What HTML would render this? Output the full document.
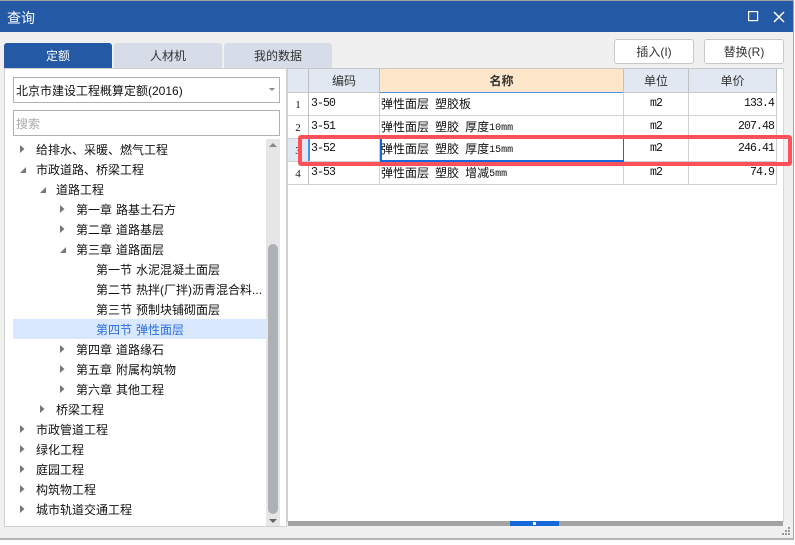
<!DOCTYPE html>
<html lang="zh">
<head>
<meta charset="utf-8">
<style>
html,body{margin:0;padding:0;background:#fff;}
#w{position:relative;width:795px;height:545px;overflow:hidden;background:#fff;font-family:"Liberation Sans","Noto Sans CJK SC",sans-serif;font-size:12px;color:#111;}
#w div{position:absolute;box-sizing:border-box;}
#w svg{position:absolute;display:block;}
.t{white-space:nowrap;line-height:22px;height:20px;word-spacing:.7px;}
.tab{top:43px;width:108px;height:25px;line-height:27px;text-align:center;background:#d6dce8;border-radius:3px 3px 0 0;color:#333;}
.btn{top:39px;width:80px;height:25px;line-height:25px;text-align:center;background:#fff;border:1px solid #c8c8c8;border-radius:3px;color:#333;}
.hd{top:69px;height:24px;line-height:25px;text-align:center;background:#e1e8f2;border-right:1px solid #c0c0c0;border-bottom:1px solid #c8c8c8;color:#333;font-size:12px;}
.h{left:288px;width:489px;height:1px;background:#d0d0d0;}
.v{width:1px;top:92px;height:93px;background:#d0d0d0;}
.c{white-space:nowrap;height:22px;line-height:22px;}
.m{font-family:"Liberation Mono","Noto Sans CJK SC",monospace;font-size:11.500px;letter-spacing:-.9px;color:#111;}
.n{left:288px;width:20px;text-align:center;font-family:"Liberation Serif",serif;font-size:11px;background:#fff;}
.cn{left:381px;font-size:12px;letter-spacing:0;word-spacing:2.7px;}
.cn span{font-family:"Liberation Mono",monospace;font-size:10px;letter-spacing:0;position:relative;top:-1px;}
.u{left:624px;width:64px;text-align:center;}
.p{left:689px;width:85px;text-align:right;}
</style>
</head>
<body>
<div id="w">
  <div style="left:0;top:0;width:794px;height:540px;background:#f0f0f0;border-right:1px solid #a8a8a8;border-bottom:2px solid #b4b4b4;"></div>
  <div style="left:0;top:0;width:794px;height:1px;background:#a0a0a0;"></div>
  <div style="left:0;top:1px;width:793px;height:31px;background:#245aa5;"></div>
  <div class="t" style="left:7px;top:7px;color:#fff;font-size:14px;">查询</div>
  <svg style="left:748px;top:11px" width="11" height="11" viewBox="0 0 11 11"><rect x=".6" y=".6" width="9" height="9" fill="none" stroke="#fff" stroke-width="1.2"/></svg>
  <svg style="left:773px;top:11px" width="12" height="12" viewBox="0 0 12 12"><path d="M1 1L11 11M11 1L1 11" fill="none" stroke="#fff" stroke-width="1.5"/></svg>

  <div class="tab" style="left:4px;background:#245aa5;color:#fff;">定额</div>
  <div class="tab" style="left:114px;">人材机</div>
  <div class="tab" style="left:224px;">我的数据</div>
  <div class="btn" style="left:614px;">插入(I)</div>
  <div class="btn" style="left:704px;">替换(R)</div>

  <div style="left:4px;top:68px;width:283px;height:459px;background:#fff;border:1px solid #d0d0d0;"></div>
  <div style="left:13px;top:77px;width:267px;height:26px;background:#fff;border:1px solid #b0b0b0;line-height:26px;padding-left:2px;white-space:nowrap;">北京市建设工程概算定额(2016)</div>
  <svg style="left:268px;top:87px" width="8" height="5"><path d="M1 1H7L4 4Z" fill="#888"/></svg>
  <div style="left:13px;top:110px;width:267px;height:26px;background:#fff;border:1px solid #b0b0b0;line-height:26px;padding-left:2px;color:#aaa;">搜索</div>

  <div class="t" style="left:36px;top:139px;">给排水、采暖、燃气工程</div>
  <div class="t" style="left:36px;top:159px;">市政道路、桥梁工程</div>
  <div class="t" style="left:56px;top:179px;">道路工程</div>
  <div class="t" style="left:76px;top:199px;">第一章 路基土石方</div>
  <div class="t" style="left:76px;top:219px;">第二章 道路基层</div>
  <div class="t" style="left:76px;top:239px;">第三章 道路面层</div>
  <div class="t" style="left:96px;top:259px;">第一节 水泥混凝土面层</div>
  <div class="t" style="left:96px;top:279px;">第二节 热拌(厂拌)沥青混合料...</div>
  <div class="t" style="left:96px;top:299px;">第三节 预制块铺砌面层</div>
  <div style="left:13px;top:319px;width:253px;height:20px;background:#d9e7ff;"></div>
  <div class="t" style="left:96px;top:319px;color:#2a6fdc;">第四节 弹性面层</div>
  <div class="t" style="left:76px;top:339px;">第四章 道路缘石</div>
  <div class="t" style="left:76px;top:359px;">第五章 附属构筑物</div>
  <div class="t" style="left:76px;top:379px;">第六章 其他工程</div>
  <div class="t" style="left:56px;top:399px;">桥梁工程</div>
  <div class="t" style="left:36px;top:419px;">市政管道工程</div>
  <div class="t" style="left:36px;top:439px;">绿化工程</div>
  <div class="t" style="left:36px;top:459px;">庭园工程</div>
  <div class="t" style="left:36px;top:479px;">构筑物工程</div>
  <div class="t" style="left:36px;top:499px;">城市轨道交通工程</div>

  <svg style="left:0;top:0" width="100" height="545" viewBox="0 0 100 545">
    <g fill="#777">
      <path d="M20 145v8l4.500-4z"/>
      <path d="M20 173l6-6v6z"/>
      <path d="M40 193l6-6v6z"/>
      <path d="M60 205v8l4.500-4z"/>
      <path d="M60 225v8l4.500-4z"/>
      <path d="M60 253l6-6v6z"/>
      <path d="M60 345v8l4.500-4z"/>
      <path d="M60 365v8l4.500-4z"/>
      <path d="M60 385v8l4.500-4z"/>
      <path d="M40 405v8l4.500-4z"/>
      <path d="M20 425v8l4.500-4z"/>
      <path d="M20 445v8l4.500-4z"/>
      <path d="M20 465v8l4.500-4z"/>
      <path d="M20 485v8l4.500-4z"/>
      <path d="M20 505v8l4.500-4z"/>
    </g>
  </svg>

  <div style="left:266px;top:139px;width:14px;height:387px;background:#e6e6e8;"></div>
  <div style="left:268px;top:244px;width:10px;height:270px;background:#adb0b5;border-radius:5px;"></div>
  <svg style="left:268px;top:142px" width="10" height="6"><path d="M1 5L5 1L9 5Z" fill="#888"/></svg>
  <svg style="left:268px;top:518px" width="10" height="6"><path d="M1 1H9L5 5Z" fill="#666"/></svg>

  <div style="left:287px;top:68px;width:497px;height:454px;background:#fff;border-top:1px solid #c8c8c8;border-left:1px solid #d0d0d0;border-right:1px solid #d8d8d8;"></div>
  <div class="hd" style="left:288px;width:21px;"></div>
  <div class="hd" style="left:309px;width:71px;">编码</div>
  <div class="hd" style="left:380px;width:244px;background:#fde6c9;border-bottom:1px solid #4a90e8;font-weight:bold;">名称</div>
  <div class="hd" style="left:624px;width:65px;">单位</div>
  <div class="hd" style="left:689px;width:88px;">单价</div>

  <div style="left:288px;top:93px;width:20px;height:92px;background:#fff;"></div>
  <div style="left:288px;top:139px;width:20px;height:22px;background:#e1e8f2;"></div>
  <div class="h" style="top:115px;"></div>
  <div class="h" style="top:138px;"></div>
  <div class="h" style="top:161px;"></div>
  <div class="h" style="top:184px;"></div>
  <div class="v" style="left:287px;"></div>
  <div class="v" style="left:308px;background:#c0c0c0;"></div>
  <div class="v" style="left:379px;"></div>
  <div class="v" style="left:623px;"></div>
  <div class="v" style="left:688px;"></div>
  <div class="v" style="left:776px;"></div>

  <div class="c n" style="top:94px;background:none;">1</div>
  <div class="c n" style="top:117px;background:none;">2</div>
  <div class="c n" style="top:140px;background:none;">3</div>
  <div class="c n" style="top:163px;background:none;">4</div>

  <div class="c m" style="left:311px;top:93px;">3-50</div>
  <div class="c m" style="left:311px;top:116px;">3-51</div>
  <div class="c m" style="left:311px;top:138px;">3-52</div>
  <div class="c m" style="left:311px;top:162px;">3-53</div>

  <div style="left:380px;top:138px;width:244px;height:24px;border:1px solid #1668dc;border-width:1px 1px 2px 2px;border-top-color:transparent;"></div>
  <div style="left:308px;top:139px;width:2px;height:22px;background:#4a90e8;"></div>

  <div class="c cn" style="top:93px;">弹性面层 塑胶板</div>
  <div class="c cn" style="top:116px;">弹性面层 塑胶 厚度<span>10mm</span></div>
  <div class="c cn" style="top:138px;">弹性面层 塑胶 厚度<span>15mm</span></div>
  <div class="c cn" style="top:162px;">弹性面层 塑胶 增减<span>5mm</span></div>

  <div class="c m u" style="top:93px;">m2</div>
  <div class="c m u" style="top:116px;">m2</div>
  <div class="c m u" style="top:138px;">m2</div>
  <div class="c m u" style="top:162px;">m2</div>
  <div class="c m p" style="top:93px;">133.4</div>
  <div class="c m p" style="top:116px;">207.48</div>
  <div class="c m p" style="top:138px;">246.41</div>
  <div class="c m p" style="top:162px;">74.9</div>

  <div style="left:298px;top:135px;width:494px;height:31px;border:4px solid #fc5159;border-radius:3px;"></div>

  <div style="left:288px;top:521px;width:495px;height:5px;background:#a3a3a3;"></div>
  <div style="left:510px;top:521px;width:49px;height:5px;background:#1668d8;"></div>
  <div style="left:533px;top:522px;width:3px;height:3px;background:#fff;"></div>

  <svg style="left:781px;top:526px" width="12" height="12" viewBox="0 0 12 12">
    <g fill="#999"><rect x="7" y="1" width="2" height="2"/><rect x="4" y="4" width="2" height="2"/><rect x="7" y="4" width="2" height="2"/><rect x="1" y="7" width="2" height="2"/><rect x="4" y="7" width="2" height="2"/><rect x="7" y="7" width="2" height="2"/></g>
  </svg>
</div>
</body>
</html>
